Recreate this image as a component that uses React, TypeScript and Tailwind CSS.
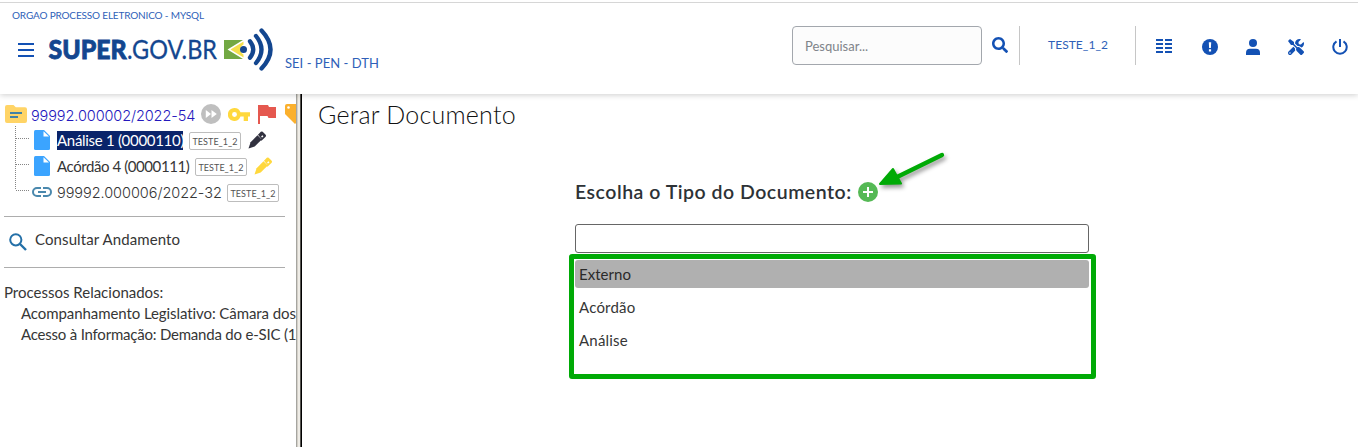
import type { ReactNode } from "react";
import { FaTools } from "react-icons/fa";

function Logo() {
  return (
    <svg className="block h-[46px] w-[226px] shrink-0" viewBox="0 0 226 46">
      <text x="0.5" y="31.8" textLength="78" lengthAdjust="spacingAndGlyphs" fill="#13468f" stroke="#13468f" strokeWidth="0.8" fontSize="26.5" fontWeight="900" fontFamily="Lato, sans-serif">SUPER</text>
      <text x="79" y="31.8" textLength="90" lengthAdjust="spacingAndGlyphs" fill="#13468f" stroke="#13468f" strokeWidth="0.3" fontSize="26.5" fontWeight="400" fontFamily="Lato, sans-serif">.GOV.BR</text>
      <path d="M176 13H195L179.500 22.500L195 32H176Z" fill="#72a843" />
      <path d="M195.500 14.500V17.600A5.500 5.500 0 0 0 195.500 27.400V30.500L182.500 22.500Z" fill="#f4e04d" />
      <circle cx="195.500" cy="22.500" r="3.500" fill="#13468f" />
      <g fill="none" stroke="#13468f" strokeWidth="4.300" strokeLinecap="round">
        <path d="M202 14.300Q208.500 22.500 202 30.700" />
        <path d="M208 9Q219 22.500 208 36" />
        <path d="M213.500 3.500Q231.500 22.500 213.500 41.500" />
      </g>
    </svg>
  );
}

function MenuIcon() {
  return (
    <svg className="h-[14px] w-4 shrink-0" viewBox="0 0 16 14" fill="#1351b4">
      <path d="M0 0h16v2H0zM0 6h16v2H0zM0 12h16v2H0z" />
    </svg>
  );
}

function SearchSolid() {
  return (
    <svg className="h-4 w-4" viewBox="0 0 512 512" fill="#1351b4">
      <path d="M505 442.700L405.300 343c-4.500-4.500-10.600-7-17-7H372c27.600-35.300 44-79.700 44-128C416 93.100 322.900 0 208 0S0 93.100 0 208s93.100 208 208 208c48.300 0 92.700-16.400 128-44v16.300c0 6.400 2.500 12.500 7 17l99.700 99.700c9.400 9.400 24.600 9.400 33.900 0l28.300-28.300c9.400-9.400 9.400-24.600.1-34zM208 336c-70.700 0-128-57.200-128-128 0-70.700 57.200-128 128-128 70.700 0 128 57.200 128 128 0 70.700-57.200 128-128 128z" />
    </svg>
  );
}

function Glyph({ children }: { children: ReactNode }) {
  return <svg className="h-4 w-4 shrink-0" viewBox="0 0 16 16" fill="#1351b4">{children}</svg>;
}

function Tag() {
  return (
    <span className="flex h-[18px] w-[52px] shrink-0 items-center justify-center rounded-xs border border-[#bdbdbd] pt-px text-[9px] leading-none tracking-[0.04px] text-[#555]">
      TESTE_1_2
    </span>
  );
}

function DocIcon() {
  return (
    <svg className="h-5 w-4 shrink-0" viewBox="0 0 16 20">
      <path d="M1.500 0H10L16 6V18.500Q16 20 14.500 20H1.500Q0 20 0 18.500V1.500Q0 0 1.500 0Z" fill="#3ba4ff" />
      <path d="M9.500 1.200V6.500H15Z" fill="#fff" />
    </svg>
  );
}

function PenIcon({ className }: { className: string }) {
  return (
    <svg className={className} viewBox="0 0 19 19" fill="currentColor">
      <path d="M0 18.500L2.200 12L9.500 4.500L14 9L6.500 16.400Z" />
      <path d="M10 4L13 .9Q14 0 15 .9L18.100 4Q19 5 18.100 6L13.700 10.400L12.300 9L15.800 5.500L14.700 4.400L13.300 5.800L14.300 6.800L13.200 7.900Z" />
    </svg>
  );
}

function Sidebar() {
  return (
    <aside className="flex h-full w-[296px] shrink-0 flex-col overflow-hidden whitespace-nowrap text-[15px] leading-5 text-[#363636]">
      <div className="flex h-5 shrink-0 items-center pl-[5px] mt-[10px]">
        <svg className="h-[18px] w-[22px] shrink-0" viewBox="0 0 22 18">
          <path d="M2 0H8.500L10.800 2.200H20Q22 2.200 22 4.200V16Q22 18 20 18H2Q0 18 0 16V2Q0 0 2 0Z" fill="#ffd466" />
          <path d="M5 7H17V9H5zM5 11H13V13H5z" fill="#4382a6" />
        </svg>
        <span className="ml-1 w-[164px] shrink-0 pt-[4px] font-['Inter',sans-serif] text-[14.500px] font-light tracking-[-0.1px] text-[#2418bd]">99992.000002/2022-54</span>
        <svg className="ml-[6px] h-5 w-5 shrink-0" viewBox="0 0 20 20">
          <circle cx="10" cy="10" r="10" fill="#bfbfbf" />
          <path d="M4.800 6L10 10L4.800 14zM10.500 6L15.800 10L10.500 14z" fill="#fff" />
        </svg>
        <svg className="ml-[7px] h-[13px] w-[22px] shrink-0" viewBox="0 0 22 13">
          <path fillRule="evenodd" d="M6.500 0A6.500 6.500 0 0 1 12.500 4.200H22V8.600H20V13H15.700V8.600H12.500A6.500 6.500 0 1 1 6.500 0ZM6.500 4A2.400 2.400 0 1 0 6.500 8.900A2.400 2.400 0 1 0 6.500 4Z" fill="#ffd83d" />
        </svg>
        <svg className="ml-[8px] h-5 w-[18px] shrink-0" viewBox="0 0 18 20">
          <path d="M0 1H10L11 3H18V14H10.500L9.500 12H2V20H0Z" fill="#e5584f" />
        </svg>
        <svg className="ml-[9px] h-5 w-5 shrink-0" viewBox="0 0 20 20">
          <path d="M2 0H11L20 9L10 20L0 10V2Q0 0 2 0Z" fill="#fbb02d" />
          <circle cx="3.500" cy="3.500" r="1.300" fill="#fff" />
        </svg>
      </div>

      <div className="flex h-[80px] shrink-0 pl-[15px]">
        <svg className="h-[68px] w-[18px] shrink-0" viewBox="0 0 18 68" fill="none" stroke="#858585" strokeDasharray="1 1">
          <path d="M.5 2V66M1 14.500H15M1 40.500H15M1 66.500H15" />
        </svg>
        <div className="flex flex-col pt-[3px]">
          <div className="flex h-[26px] items-center pl-px">
            <DocIcon />
            <span className="ml-[7px] mt-px flex h-[19px] w-[126px] shrink-0 items-center bg-[#0a246a] tracking-[-0.3px] text-white">Análise 1 (0000110)</span>
            <span className="ml-[6px] pt-[3px]"><Tag /></span>
            <PenIcon className="ml-[7px] h-[18px] w-[19px] shrink-0 text-[#31313f]" />
          </div>
          <div className="flex h-[26px] items-center pl-px">
            <DocIcon />
            <span className="ml-[7px] mt-px w-[132px] shrink-0 tracking-[-0.42px]">Acórdão 4 (0000111)</span>
            <span className="ml-[6px] pt-[3px]"><Tag /></span>
            <PenIcon className="ml-[7px] h-[18px] w-[19px] shrink-0 text-[#ffd83d]" />
          </div>
          <div className="flex h-[26px] items-center">
            <svg className="-ml-px mt-[2px] h-[10px] w-5 shrink-0" viewBox="0 0 20 10" fill="none" stroke="#4a88ad" strokeWidth="2">
              <path d="M9 1H5A4 4 0 0 0 5 9H9M11 1H15A4 4 0 0 1 15 9H11M6 5H14" />
            </svg>
            <span className="ml-[5px] mt-[3px] w-[165px] shrink-0 font-['Inter',sans-serif] text-[14.500px] font-light tracking-[-0.05px]">99992.000006/2022-32</span>
            <span className="ml-[5px] pt-[4px]"><Tag /></span>
          </div>
        </div>
      </div>

      <div className="ml-[4px] mt-[12px] flex h-[52px] w-[281px] shrink-0 items-center border-y border-[#adadad]">
        <svg className="ml-[5px] h-[18px] w-[18px] shrink-0" viewBox="0 0 18 18" fill="none" stroke="#2470a8" strokeWidth="2">
          <circle cx="6.800" cy="6.800" r="5.600" />
          <path d="M11 11L17 17" strokeWidth="2.400" />
        </svg>
        <span className="ml-[8px] -mt-[6px] tracking-[0.1px]">Consultar Andamento</span>
      </div>
      <div className="mt-[14px] pl-[4px] leading-[21px]">Processos Relacionados:</div>
      <div className="pl-[21px] leading-[21px] tracking-[-0.08px]">Acompanhamento Legislativo: Câmara dos</div>
      <div className="pl-[21px] leading-[21px] tracking-[-0.21px]">Acesso à Informação: Demanda do e-SIC (1</div>
    </aside>
  );
}

function Header() {
  return (
    <header className="relative z-10 flex h-[94px] shrink-0 flex-col bg-white text-[#2f5fb8] shadow-[0_1px_6px_rgba(0,0,0,0.2)]">
      <div className="mt-[2px] h-px shrink-0 bg-[#d6d6d6]" />
      <div className="flex h-[91px]">
        <div className="flex w-[440px] flex-col">
          <div className="pl-[12px] pt-[6px] text-[10px] leading-[13px] tracking-[-0.16px]">ORGAO PROCESSO ELETRONICO - MYSQL</div>
          <div className="mt-[5px] flex items-start pl-[18px]">
            <div className="mr-[14px] pt-[16px]"><MenuIcon /></div>
            <Logo />
            <span className="ml-[11px] mt-[28px] text-[13px] leading-4 tracking-[0.03px]">SEI - PEN - DTH</span>
          </div>
        </div>
        <div className="ml-[352px] flex items-start pt-[23px]">
          <div className="flex h-[39px] w-[190px] items-center rounded border border-[#a3a7ad] bg-[#fcfcfc] pl-[12px] pt-[3px] text-[13px] text-[#80848a]">Pesquisar...</div>
          <div className="ml-[10px] mt-[11px]"><SearchSolid /></div>
          <div className="ml-[11px] h-[39px] w-px bg-[#c6c6c6]" />
          <span className="ml-[28px] mt-[11px] w-[60px] text-[12px] leading-4 tracking-[0.06px]">TESTE_1_2</span>
          <div className="ml-[27px] h-[39px] w-px bg-[#c6c6c6]" />
          <div className="ml-[20px] mt-[13px] flex">
            <Glyph><path d="M0 0h7v2H0zM9 0h7v2H9zM0 4h7v2H0zM9 4h7v2H9zM0 8h7v2H0zM9 8h7v2H9zM0 12h7v2H0zM9 12h7v2H9z" /></Glyph>
            <span className="ml-[30px]"><Glyph><circle cx="8" cy="8" r="8" /><path d="M6.800 3.300H9.200L8.900 9H7.100zM6.900 10.300h2.200v2.200H6.900z" fill="#fff" /></Glyph></span>
            <span className="ml-[27px]"><Glyph><circle cx="8" cy="4" r="4" /><path d="M1 16V14Q1 9.800 5 9.800H11Q15 9.800 15 14V16Z" /></Glyph></span>
            <span className="ml-[27px]"><FaTools className="h-4 w-4 text-[#1351b4]" /></span>
            <span className="ml-[28px]">
              <svg className="h-4 w-4" viewBox="0 0 16 16" fill="none" stroke="#1351b4" strokeWidth="2">
                <path d="M4.500 2.300A6.700 6.700 0 1 0 11.500 2.300M8 0V8" />
              </svg>
            </span>
          </div>
        </div>
      </div>
    </header>
  );
}

function TypePicker() {
  const options = ["Externo", "Acórdão", "Análise"];
  return (
    <div className="ml-[267px] mt-[47px] w-[527px]">
      <div className="relative flex h-[30px] items-center pl-[6px]">
        <h2 className="w-[276px] whitespace-nowrap text-[19.500px] font-semibold leading-6 tracking-[0.5px] text-[#2d3236]">Escolha o Tipo do Documento:</h2>
        <svg className="ml-[7px] h-5 w-5" viewBox="0 0 20 20">
          <circle cx="10" cy="10" r="10" fill="#55b955" />
          <path d="M10 5V15M5 10H15" stroke="#fff" strokeWidth="2" />
        </svg>
        <svg className="absolute -top-[28px] left-[304px] h-[44px] w-[76px] drop-shadow-[2px_3px_2px_rgba(0,0,0,0.4)]" viewBox="0 0 76 44">
          <path d="M69 6L22 29" stroke="#00aa06" strokeWidth="4.300" strokeLinecap="round" />
          <path d="M7 35L20 20L28 34.500Z" fill="#00aa06" stroke="#00aa06" strokeWidth="2" strokeLinejoin="round" />
        </svg>
      </div>
      <div className="ml-[6px] mt-[17px] h-[29px] w-[514px] rounded-[3px] border border-[#666] bg-white" />
      <div className="mt-px h-[125px] rounded-[3px] border-[5px] border-[#00aa06] px-px pt-px">
        {options.map((option, index) => (
          <div key={option} className={index === 0 ? "mb-[5px] flex h-[28px] w-[514px] items-center rounded-[3px] bg-[#b0b0b0] pl-[4px] pt-px text-[15px] tracking-[0.05px] text-[#2a2a2a]" : "mb-[5px] flex h-[28px] w-[514px] items-center pl-[4px] pt-px text-[15px] tracking-[0.2px] text-[#363636]"}>
            {option}
          </div>
        ))}
      </div>
    </div>
  );
}

export default function App() {
  return (
    <div className="flex h-[447px] w-[1358px] flex-col overflow-hidden bg-white font-['Lato',sans-serif]">
      <Header />
      <div className="flex min-h-0 flex-1">
        <Sidebar />
        <div className="flex w-[6px] shrink-0 border-l border-r border-l-[#a5a5a0] border-r-black bg-[#d4d0c8]">
          <div className="ml-[1px] w-[2px] bg-[#eeece6]" />
          <div className="w-px bg-[#55534f]" />
        </div>
        <main className="min-w-0 flex-1">
          <h1 className="ml-[16px] mt-[5px] h-[31px] text-[25px] font-light leading-[31px] tracking-[0.22px] text-[#111]">Gerar Documento</h1>
          <TypePicker />
        </main>
      </div>
    </div>
  );
}
